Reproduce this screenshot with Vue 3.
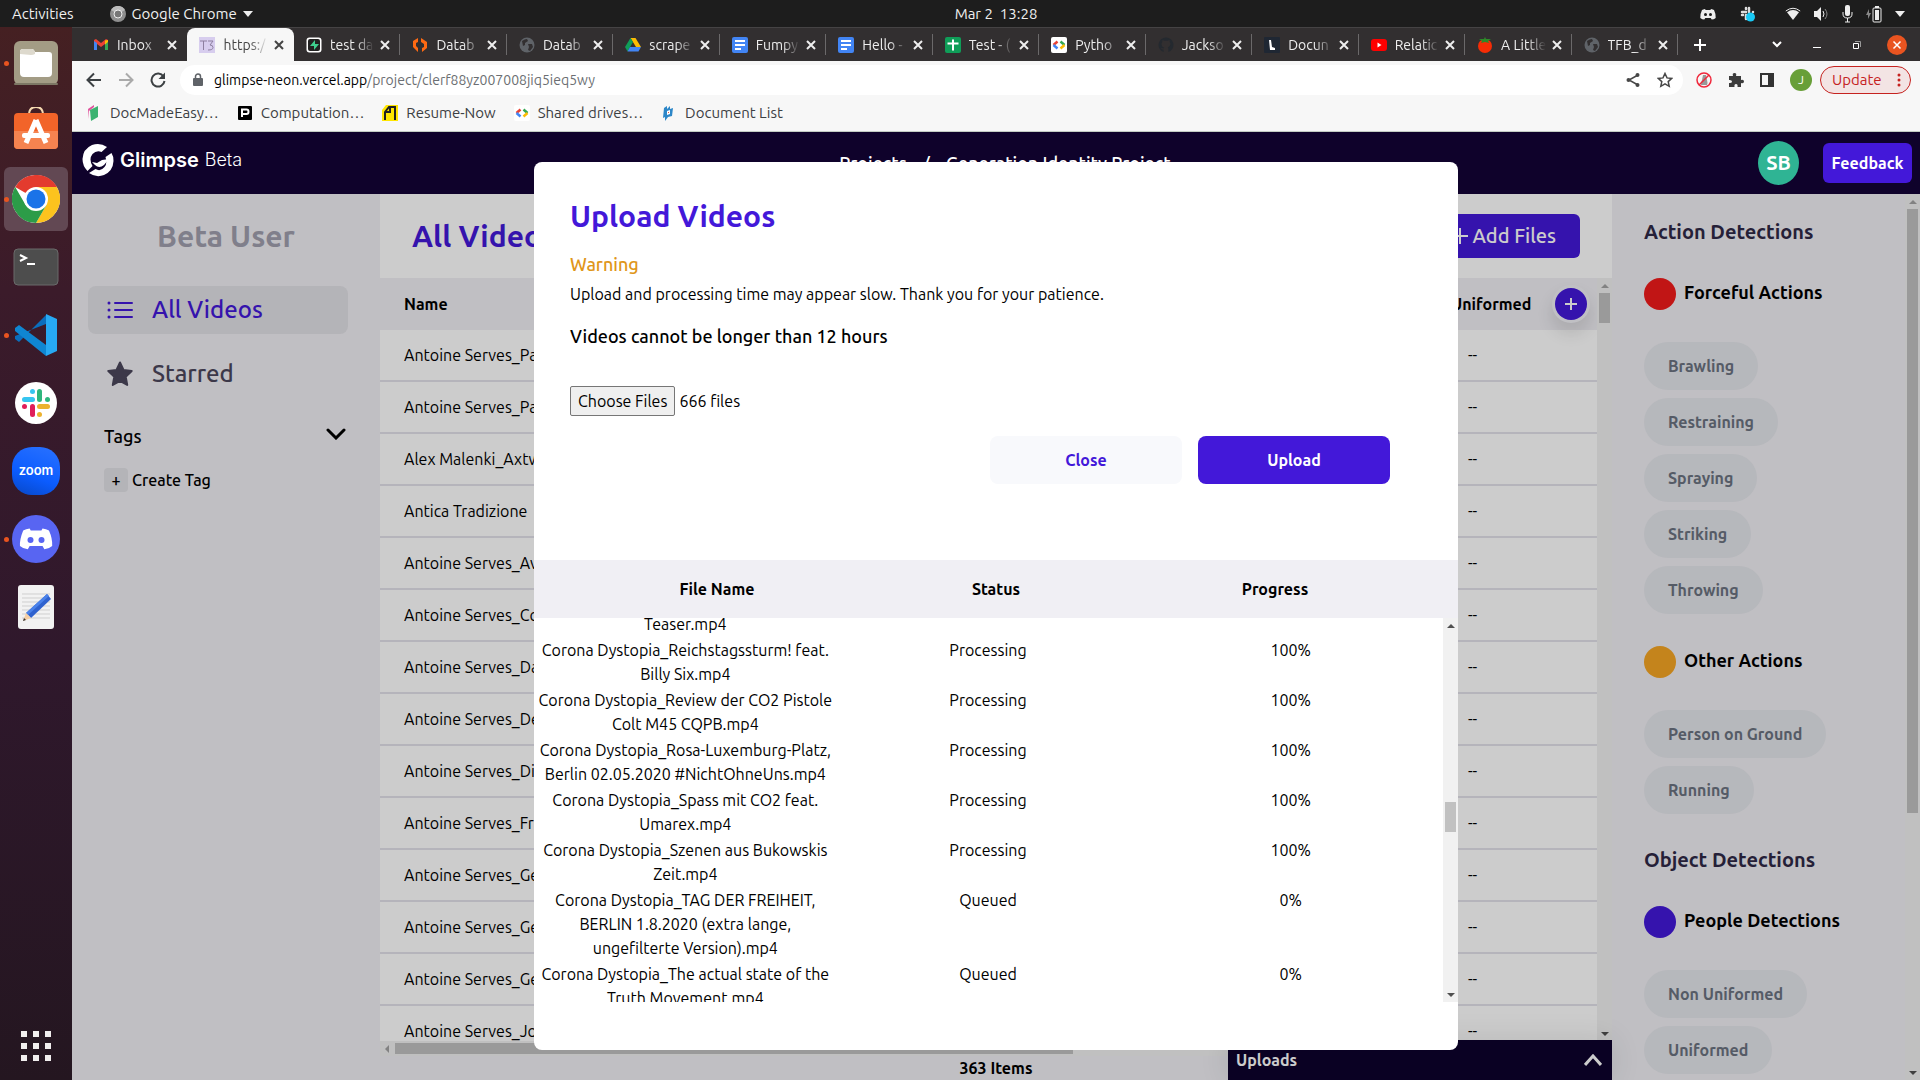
<script setup>
const art = {
  files: '<rect x="2" y="2" width="44" height="44" rx="6" fill="#a39c85"/><rect x="2" y="44" width="44" height="2" rx="1" fill="#7d7764"/><path d="M8 13q0-3 3-3h9q2 0 3 3h14q3 0 3 3v18q0 4-4 4H12q-4 0-4-4z" fill="#fff"/><path d="M8 15v-2q0-3 3-3h9q2 0 3 3v2q-2 1-4 1z" fill="#ddd9cd"/>',
  store: '<g transform="translate(0 -3)"><path d="M17 11q0-8 7-8t7 8" fill="none" stroke="#f5d9b0" stroke-width="2"/><rect x="2" y="9" width="44" height="36" rx="4" fill="#f26429"/><path d="M2 27h44v14q0 4-4 4H6q-4 0-4-4z" fill="#f58350"/><path d="M24 16 14 39M24 16l10 23" stroke="#fff" stroke-width="5"/><rect x="10" y="29" width="28" height="5" rx="2" fill="#fff"/></g>',
  chrome: '<circle cx="24" cy="24" r="24" fill="#fff"/><path d="M24 24 3.2 12A24 24 0 0 1 44.8 12z" fill="#e33b2e"/><path d="M24 0A24 24 0 0 1 44.8 12H24z" fill="#e33b2e"/><path d="M44.8 12A24 24 0 0 1 24 48L34.4 30 24 12z" fill="#fcc31e"/><path d="M3.2 12A24 24 0 0 0 24 48l10.4-18H13.6z" fill="#2c9c48"/><circle cx="24" cy="24" r="12" fill="#fff"/><circle cx="24" cy="24" r="9.500" fill="#1a73e8"/>',
  terminal: '<rect x="2" y="6" width="44" height="36" rx="4" fill="#4d4d4d" stroke="#6a6a6a"/><path d="m8 12 6 3-6 3" fill="none" stroke="#fff" stroke-width="2"/><path d="M15 21h8" stroke="#fff" stroke-width="2"/>',
  code: '<path d="M34 4 7 31l-4-3v-3L34 13z" fill="#0a6ebd"/><path d="M34 45 3 20v-3l4-3 27 20z" fill="#0f86d2"/><path d="m34 3 11 5v32l-11 5z" fill="#27a9f3"/>',
  slack: '<circle cx="24" cy="24" r="21" fill="#fff"/><g stroke-width="5" stroke-linecap="round"><path d="M20.500 20.500h-8" stroke="#36c5f0"/><path d="M20.500 12.500v0" stroke="#36c5f0"/><path d="M27.500 20.500v-8" stroke="#2eb67d"/><path d="M35.500 20.500h0" stroke="#2eb67d"/><path d="M27.500 27.500h8" stroke="#ecb22e"/><path d="M27.500 35.500h0" stroke="#ecb22e"/><path d="M20.500 27.500v8" stroke="#e01e5a"/><path d="M12.500 27.500h0" stroke="#e01e5a"/></g>',
  discord: '<circle cx="24" cy="24" r="24" fill="#5865f2"/><path d="M17 13q-4 .6-7 2.200Q6 25 6.500 32q4 3.500 8.500 3.500l2-3.500h14l2 3.500q4.500 0 8.500-3.500Q42 24 38 15.200 35 13.600 31 13l-1.200 2.300H18.200z" fill="#fff" transform="translate(2 1.500) scale(.92)"/><circle cx="18.500" cy="25" r="3" fill="#5865f2"/><circle cx="29.500" cy="25" r="3" fill="#5865f2"/>',
  editor: '<rect x="6" y="2" width="36" height="44" rx="3" fill="#f2f2f2"/><path d="M10 11h28M10 15h28M10 19h28M10 23h28M10 27h28M10 31h28M10 35h28" stroke="#cfcfcf"/><path d="m35 11 4 5-20 19-5-5z" fill="#2f62cf"/><path d="m35 11 2 2-21 19-2-2z" fill="#4a82ea"/><path d="m14 30 5 5-8 3z" fill="#f5cfa5"/><path d="m12 35 2 2-3 1z" fill="#333"/>',
  gmail: '<path d="M1 3v10h3V7l4 3 4-3v6h3V3l-2-1-5 4-5-4z" fill="#ea4335"/><path d="M1 4v9h3V6z" fill="#4285f4"/><path d="M15 4v9h-3V6z" fill="#34a853"/><path d="M12 3.500 15 3v2l-3 2.500z" fill="#fbbc04"/>',
  t3: '<rect width="16" height="16" fill="#d7cdee"/><path d="M1 4h7M4.500 4v9M9 4h5l-3 4q3 0 3 2.500T9 13" fill="none" stroke="#8d7f9f"/>',
  supa: '<rect x=".5" y=".5" width="15" height="15" rx="3" fill="#fff"/><rect x="2" y="2" width="12" height="12" rx="2" fill="#222"/><path d="m9 3-5 6h4v4l5-6H9z" fill="#3ecf8e"/>',
  orange: '<path d="M6 1 1 4v6l5 5v-4L4 9V6l2-1zM9 1l6 4v6l-5 4v-4l2-1V7L9 5z" fill="#ff6a13"/>',
  globe: '<circle cx="8" cy="8" r="7.500" fill="#5f6368"/><path d="M3 4q3-2 5-2l1 2-3 2v2l-2 1zM9 7l4 0 1 3-3 4-2-1 1-3z" fill="#322f30"/>',
  drive: '<path d="M5.500 1h5L16 10h-5z" fill="#fbbc04"/><path d="M5.500 1 0 10l2.500 4.500L8 5z" fill="#0f9d58"/><path d="M2.500 14.500h11L16 10H5z" fill="#4285f4"/>',
  doc: '<rect x="0" y="0" width="16" height="16" rx="2" fill="#4285f4"/><path d="M3 4h10M3 8h10M3 12h6" stroke="#fff" stroke-width="2"/>',
  sheet: '<rect width="16" height="16" rx="2" fill="#0f9d58"/><path d="M2.500 6.500h11M8 2.500v11" stroke="#fff" stroke-width="2"/>',
  brackets: '<rect width="16" height="16" rx="2" fill="#fff"/><path d="m6.500 4.500-4 3.500" stroke="#ea4335" stroke-width="2.500"/><path d="m2.500 8 4 3.500" stroke="#4285f4" stroke-width="2.500"/><path d="m9.500 4.500 4 3.500" stroke="#34a853" stroke-width="2.500"/><path d="m13.500 8-4 3.500" stroke="#fbbc04" stroke-width="2.500"/>',
  github: '<path d="M8 .5a7.500 7.500 0 0 0-2.400 14.600v-2.600q-2 .3-2.600-1.500 1.500.4 2.600.4l.5-1C4 10 3.500 8.500 3.500 7q0-1.300.8-2.100L4.400 3l2 .8h3.200l2-.8.100 1.900q.8.800.8 2.100 0 2-2.600 3.400.5.600.5 1.500v3.200A7.500 7.500 0 0 0 8 .5z" fill="#24292f"/>',
  lens: '<rect width="16" height="16" rx="1" fill="#1f2733"/><path d="M5 3h2l1 7 3 1v2H6z" fill="#fff"/>',
  youtube: '<rect y="2" width="16" height="12" rx="3" fill="#f00"/><path d="m6.500 5.500 4 2.500-4 2.500z" fill="#fff"/>',
  tomato: '<circle cx="8" cy="9" r="7" fill="#f72c05"/><path d="M2 2h5l1-2 1 2h5l-3 2 1 2-4-1-4 1 1-2z" fill="#2c8a28"/>',
  page: '<path d="m2 4 6-4v2L3 6v8z" fill="#e0529c"/><path d="m4 5 8-4v11l-7 4z" fill="#3cb371"/>',
  pbox: '<rect x="1" y="1" width="14" height="14" rx="1" fill="#000"/><path d="M5 12V4.500h4.500q2 0 2 2.200T9.500 9H5" fill="none" stroke="#fff" stroke-width="2"/>',
  resume: '<path d="M4 0h12v16H0V5z" fill="#ffe600"/><path d="M3 15V7l4-5h6v13M8 2v5H3" fill="none" stroke="#222" stroke-width="2"/>',
  list: '<path d="m3 3 3-2v3l3-3v3l3-1-1 8-4 1-3 4v-4L2 13z" fill="#2d87c8"/><path d="M6 6l3-1v4l-3 1z" fill="#fff"/><path d="M7 7h1v1H7z" fill="#e54"/>'
}
const dock = [
  { id: 'files', on: true }, { id: 'store' }, { id: 'chrome', on: true, active: true }, { id: 'terminal' },
  { id: 'code', on: true }, { id: 'slack' }, { id: 'zoom' }, { id: 'discord', on: true }, { id: 'editor' }
]
const tabs = [
  ['gmail', 'Inbox'], ['t3', 'https:/'], ['supa', 'test da'], ['orange', 'Datab'], ['globe', 'Datab'],
  ['drive', 'scrape'], ['doc', 'Fumpy'], ['doc', 'Hello -'], ['sheet', 'Test - ('], ['brackets', 'Pytho'],
  ['github', 'Jackso'], ['lens', 'Docun'], ['youtube', 'Relatic'], ['tomato', 'A Little'], ['globe', 'TFB_d']
]
const bookmarks = [
  ['page', 'DocMadeEasy…'], ['pbox', 'Computation…'], ['resume', 'Resume-Now'], ['brackets', 'Shared drives…'], ['list', 'Document List']
]
const videos = [
  'Antoine Serves_Pa', 'Antoine Serves_Pa', 'Alex Malenki_Axtw', 'Antica Tradizione', 'Antoine Serves_Av', 'Antoine Serves_Co',
  'Antoine Serves_Da', 'Antoine Serves_De', 'Antoine Serves_Di', 'Antoine Serves_Fr', 'Antoine Serves_Ge', 'Antoine Serves_Ge',
  'Antoine Serves_Ge', 'Antoine Serves_Jo'
]
const detections = [
  {
    title: 'Action Detections',
    groups: [
      { name: 'Forceful Actions', tone: 'red', chips: ['Brawling', 'Restraining', 'Spraying', 'Striking', 'Throwing'] },
      { name: 'Other Actions', tone: 'amber', chips: ['Person on Ground', 'Running'] }
    ]
  },
  { title: 'Object Detections', groups: [{ name: 'People Detections', tone: 'violet', chips: ['Non Uniformed', 'Uniformed'] }] }
]
const uploads = [
  ['Teaser.mp4', '', ''],
  ['Corona Dystopia_Reichstagssturm! feat.\nBilly Six.mp4', 'Processing', '100%'],
  ['Corona Dystopia_Review der CO2 Pistole\nColt M45 CQPB.mp4', 'Processing', '100%'],
  ['Corona Dystopia_Rosa-Luxemburg-Platz,\nBerlin 02.05.2020 #NichtOhneUns.mp4', 'Processing', '100%'],
  ['Corona Dystopia_Spass mit CO2 feat.\nUmarex.mp4', 'Processing', '100%'],
  ['Corona Dystopia_Szenen aus Bukowskis\nZeit.mp4', 'Processing', '100%'],
  ['Corona Dystopia_TAG DER FREIHEIT,\nBERLIN 1.8.2020 (extra lange,\nungefilterte Version).mp4', 'Queued', '0%'],
  ['Corona Dystopia_The actual state of the\nTruth Movement.mp4', 'Queued', '0%']
]
</script>

<template>
  <div class="desktop">
    <header class="topbar">
      <div class="top-left">
        <span>Activities</span>
        <span class="app-menu">
          <svg width="16" height="16" viewBox="0 0 16 16"><circle cx="8" cy="8" r="8" fill="#8f8f8f" /><path d="M8 8 1 4a8 8 0 0 1 14 0z" fill="#bbb" /><circle cx="8" cy="8" r="4" fill="#777" stroke="#eee" /></svg>
          Google Chrome
          <svg width="10" height="6" viewBox="0 0 10 6"><path d="M0 0h10L5 6z" fill="#eee" /></svg>
        </span>
      </div>
      <time class="clock">Mar 2&nbsp; 13:28</time>
      <div class="tray">
        <svg width="16" height="16" viewBox="0 0 16 16"><path d="M5 3Q3 3.300 2 4 0 8 .3 12q2 1.500 4 1.500l1-1.500h5.400l1 1.500q2 0 4-1.500Q16 8 14 4q-1-.7-3-1l-.6 1H5.600z" fill="#eee" /><circle cx="5.500" cy="8.500" r="1.500" fill="#1d1d1d" /><circle cx="10.500" cy="8.500" r="1.500" fill="#1d1d1d" /></svg>
        <svg class="tray-slack" width="16" height="16" viewBox="0 0 16 16"><path d="M6 6H2M6 2v1M9 6V2M13 6h0M6 9v4M2 9h1" stroke="#ddd" stroke-width="2.500" stroke-linecap="round" /><circle cx="10.500" cy="11" r="4.500" fill="#19c9f5" /></svg>
        <svg class="tray-wifi" width="16" height="14" viewBox="0 0 16 14"><path d="M.8 4Q8-1.500 15.200 4" fill="none" stroke="#eee" /><path d="M2 5.200Q8 1 14 5.200L8 13z" fill="#eee" /></svg>
        <svg width="16" height="16" viewBox="0 0 16 16"><path d="M1 5h3l4-4v14l-4-4H1z" fill="#eee" /><path d="M10 5q2 3 0 6" fill="none" stroke="#eee" /><path d="M12 3q4 5 0 10" fill="none" stroke="#888" /></svg>
        <svg width="12" height="18" viewBox="0 0 12 18"><rect x="4" y="0" width="5" height="11" rx="2" fill="#eee" /><path d="M2 7v2q0 4 4.500 4T11 9V7M6.500 13v4M4 17h5" fill="none" stroke="#eee" /></svg>
        <svg width="18" height="18" viewBox="0 0 18 18"><path d="M4 4 1 10h2v4l3-6H4z" fill="#888" /><path d="M10 1h4v2h-4z" fill="#eee" /><rect x="8" y="3" width="8" height="14" rx="1" fill="none" stroke="#eee" /><path d="M10 5h4v10h-4z" fill="#eee" /></svg>
        <svg width="10" height="6" viewBox="0 0 10 6"><path d="M0 0h10L5 6z" fill="#eee" /></svg>
      </div>
    </header>

    <div class="workspace">
      <nav class="dock" aria-label="Dock">
        <div v-for="d in dock" :key="d.id" class="dock-slot" :class="{ running: d.on, active: d.active }">
          <span v-if="d.id === 'zoom'" class="zoom-app">zoom</span>
          <svg v-else width="48" height="48" viewBox="0 0 48 48" v-html="art[d.id]"></svg>
        </div>
        <svg class="apps" width="30" height="30" viewBox="0 0 30 30"><path d="M3 0v30M15 0v30M27 0v30" stroke="#f1eeee" stroke-width="6" stroke-dasharray="6 6" /></svg>
      </nav>

      <div class="browser">
        <div class="tabstrip">
          <div class="tabs">
            <div v-for="(t, i) in tabs" :key="i" class="tab" :class="{ current: i === 1 }">
              <svg width="16" height="16" viewBox="0 0 16 16" v-html="art[t[0]]"></svg>
              <span class="tab-title">{{ t[1] }}</span>
              <svg class="tab-x" width="10" height="10" viewBox="0 0 10 10"><path d="m1 1 8 8M9 1 1 9" stroke="currentColor" stroke-width="2" /></svg>
            </div>
          </div>
          <div class="window-controls">
            <svg width="14" height="14" viewBox="0 0 14 14"><path d="M7 1v12M1 7h12" stroke="#fff" stroke-width="2" /></svg>
            <svg class="push" width="10" height="7" viewBox="0 0 10 7"><path d="m1 1 4 4 4-4" fill="none" stroke="#fff" stroke-width="2" /></svg>
            <svg width="8" height="8" viewBox="0 0 8 8"><path d="M0 6.500h8" stroke="#fff" /></svg>
            <svg width="8" height="8" viewBox="0 0 8 8"><path d="M.5 2.500h5v5h-5z" fill="none" stroke="#fff" /><path d="M2 .5h5.500V6" fill="none" stroke="#999" /></svg>
            <svg width="20" height="20" viewBox="0 0 20 20"><circle cx="10" cy="10" r="10" fill="#e95420" /><path d="m6.500 6.500 7 7M13.500 6.500l-7 7" stroke="#fff" stroke-width="1.500" /></svg>
          </div>
        </div>

        <div class="toolbar">
          <svg width="16" height="16" viewBox="0 0 16 16"><path d="M15 8H2M8 1.500 1.500 8 8 14.500" fill="none" stroke="#3c4043" stroke-width="2" /></svg>
          <svg width="16" height="16" viewBox="0 0 16 16"><path d="M1 8h13M8 1.500 14.500 8 8 14.500" fill="none" stroke="#aaa" stroke-width="2" /></svg>
          <svg width="16" height="16" viewBox="0 0 16 16"><path d="M13.500 4.500A6.500 6.500 0 1 0 14.500 9" fill="none" stroke="#3c4043" stroke-width="2" /><path d="M15 .5V7H8.500z" fill="#3c4043" /></svg>
          <div class="omnibox">
            <svg width="10" height="13" viewBox="0 0 10 13"><rect y="5" width="10" height="8" rx="1" fill="#5f6368" /><path d="M2.500 5V3.500a2.500 2.500 0 0 1 5 0V5" fill="none" stroke="#5f6368" stroke-width="1.500" /></svg>
            <span class="url">glimpse-neon.vercel.app<span>/project/clerf88yz007008jiq5ieq5wy</span></span>
            <svg width="14" height="14" viewBox="0 0 14 14"><path d="m12 2-9 5 9 5" fill="none" stroke="#474747" stroke-width="1.500" /><circle cx="11.500" cy="2" r="2" fill="#474747" /><circle cx="2.500" cy="7" r="2" fill="#474747" /><circle cx="11.500" cy="12" r="2" fill="#474747" /></svg>
            <svg class="bookmark-star" width="16" height="16" viewBox="0 0 16 16"><path d="m8 1.500 2 4.400 4.800.5-3.600 3.200 1 4.700L8 11.900l-4.200 2.400 1-4.700L1.200 6.400 6 5.900z" fill="none" stroke="#474747" stroke-width="1.500" /></svg>
          </div>
          <div class="extensions">
            <svg width="16" height="16" viewBox="0 0 16 16"><path d="M5 13q0-3 1-5l1-5h3l1 5q1 3 0 5z" fill="#999" /><circle cx="8" cy="8" r="7" fill="none" stroke="#f0283c" stroke-width="1.500" /><path d="M13 3 3 13" stroke="#f0283c" stroke-width="1.500" /></svg>
            <svg width="16" height="16" viewBox="0 0 16 16"><path d="M1 4h4q-1-3 1.500-3T8 4h5v4q3-.8 3 1.500T13 11v4H9.500q.5-3-1.500-3t-1.500 3H1v-4q3 .3 3-1.500T1 8z" fill="#3c3c3c" /></svg>
            <svg width="14" height="14" viewBox="0 0 14 14"><rect x="1" y="1" width="12" height="12" fill="none" stroke="#333" stroke-width="2" /><path d="M8 1h5v12H8z" fill="#333" /></svg>
            <span class="profile">J</span>
          </div>
          <button class="update">Update <svg width="4" height="14" viewBox="0 0 4 14"><circle cx="2" cy="2" r="1.500" fill="#c5221f" /><circle cx="2" cy="7" r="1.500" fill="#c5221f" /><circle cx="2" cy="12" r="1.500" fill="#c5221f" /></svg></button>
        </div>

        <div class="bookmarks">
          <a v-for="b in bookmarks" :key="b[1]" href="#"><svg width="16" height="16" viewBox="0 0 16 16" v-html="art[b[0]]"></svg>{{ b[1] }}</a>
        </div>

        <div class="page">
          <header class="app-header">
            <div class="brand">
              <svg width="32" height="34" viewBox="0 0 32 34"><path d="M25 4Q18-1 10 2 1 6 .5 16q0 7 5 12l5-5q-4-7 0-12 4-4 9-2z" fill="#fff" /><path d="M7 30q7 5 15 2 9-4 9.500-14 0-5-2-8l-6 4q2 7-1 10-4 5-9 2z" fill="#fff" /><path d="m10 19 5 1 5-3 7-1-5 6q-5 4-9 0z" fill="#fff" /></svg>
              <strong>Glimpse</strong><span>Beta</span>
            </div>
            <div class="crumbs"><a href="#">Projects</a><span>/</span><a href="#">Generation Identity Project</a></div>
            <div class="account"><span class="avatar">SB</span><button class="feedback">Feedback</button></div>
          </header>

          <div class="columns">
            <aside class="sidebar">
              <h2>Beta User</h2>
              <a class="nav-item selected" href="#">
                <svg width="26" height="18" viewBox="0 0 26 18"><path d="M8 2h17M8 9h17M8 16h17" stroke="currentColor" stroke-width="2" stroke-linecap="round" /><path d="M2 2h0M2 9h0M2 16h0" stroke="currentColor" stroke-width="3" stroke-linecap="round" /></svg>
                All Videos
              </a>
              <a class="nav-item" href="#">
                <svg width="26" height="26" viewBox="0 0 26 26"><path d="m13 1.500 3.500 7.500 8.200 1-6 5.700 1.500 8.300-7.200-4-7.200 4 1.500-8.300-6-5.700 8.200-1z" fill="currentColor" stroke="currentColor" stroke-width="2" stroke-linejoin="round" /></svg>
                Starred
              </a>
              <div class="tags">
                <span>Tags</span>
                <svg width="20" height="12" viewBox="0 0 20 12"><path d="m2 2 8 8 8-8" fill="none" stroke="#000" stroke-width="3" stroke-linecap="round" /></svg>
              </div>
              <div class="create-tag"><button aria-label="Add tag">+</button><span>Create Tag</span></div>
            </aside>

            <main class="library">
              <div class="library-head">
                <h1>All Videos</h1>
                <button><svg width="16" height="16" viewBox="0 0 16 16"><path d="M8 0v16M0 8h16" stroke="#fff" stroke-width="2" /></svg>Add Files</button>
              </div>
              <div class="library-body">
                <div class="grid-wrap">
                  <table class="video-table">
                    <thead><tr><th>Name</th><th class="last">Uniformed<button aria-label="Add column"><svg width="12" height="12" viewBox="0 0 12 12"><path d="M6 0v12M0 6h12" stroke="#fff" stroke-width="2" /></svg></button></th></tr></thead>
                    <tbody><tr v-for="(v, i) in videos" :key="i"><td>{{ v }}</td><td class="last">--</td></tr></tbody>
                  </table>
                </div>
                <div class="vbar"><i class="up"></i><b class="thumb-small"></b><i class="down"></i></div>
              </div>
              <div class="hbar"><i></i><b></b></div>
              <footer>363 Items</footer>
              <button class="uploads-panel">Uploads <svg width="18" height="12" viewBox="0 0 18 12"><path d="m1 11 8-9 8 9" fill="none" stroke="#fff" stroke-width="3" /></svg></button>
            </main>

            <aside class="detections">
              <div class="detections-scroll">
                <section v-for="s in detections" :key="s.title">
                  <h3>{{ s.title }}</h3>
                  <div v-for="g in s.groups" :key="g.name" class="group">
                    <h4><i :class="g.tone"></i>{{ g.name }}</h4>
                    <div class="chips"><button v-for="c in g.chips" :key="c">{{ c }}</button></div>
                  </div>
                </section>
              </div>
              <div class="vbar"><i class="up"></i><b class="thumb-tall"></b><i class="down"></i></div>
            </aside>
            <div class="backdrop"></div>
          </div>

          <div class="modal" role="dialog" aria-labelledby="upload-title">
            <div class="modal-top">
              <h2 id="upload-title">Upload Videos</h2>
              <h3>Warning</h3>
              <p>Upload and processing time may appear slow. Thank you for your patience.</p>
              <h4>Videos cannot be longer than 12 hours</h4>
              <div class="file-field">
                <label for="video-files">Choose Files</label>
                <input id="video-files" type="file" multiple />
                <span>666 files</span>
              </div>
              <div class="actions"><button class="close">Close</button><button class="submit">Upload</button></div>
            </div>
            <table class="upload-table">
              <thead><tr><th>File Name</th><th>Status</th><th>Progress</th></tr></thead>
              <tbody>
                <tr v-for="(u, i) in uploads" :key="i"><td>{{ u[0] }}</td><td>{{ u[1] }}</td><td>{{ u[2] }}</td></tr>
              </tbody>
            </table>
            <div class="vbar modal-bar"><i class="up"></i><b></b><i class="down"></i></div>
          </div>
        </div>
      </div>
    </div>
  </div>
</template>

<style>
body { margin: 0; overflow: hidden; }
</style>

<style scoped>
* { box-sizing: border-box; }
h1, h2, h3, h4, p { margin: 0; }
button { border: 0; padding: 0; font: inherit; color: inherit; cursor: pointer; }
a { color: inherit; text-decoration: none; }
svg { flex: none; display: block; }

.desktop { height: 100vh; display: flex; flex-direction: column; font-family: Ubuntu, "Noto Sans", sans-serif; font-size: 16px; line-height: 24px; color: #000; }

.topbar { height: 27px; flex: none; display: grid; grid-template-columns: 1fr auto 1fr; align-items: center; padding-left: 72px; background: #1d1d1d; color: #f0f0f0; font-size: 15px; }
.top-left { display: flex; gap: 36px; margin-left: -60px; }
.app-menu { display: flex; align-items: center; gap: 6px; }
.tray { display: flex; justify-content: flex-end; align-items: center; gap: 12px; padding-right: 15px; }
.tray-slack { margin-left: 12px; }
.tray-wifi { margin-left: 17px; }

.workspace { flex: 1; min-height: 0; display: flex; }
.dock { width: 72px; flex: none; display: flex; flex-direction: column; align-items: center; gap: 4px; padding: 4px 4px 19px; background: linear-gradient(#452022, #3b1b2a 25%, #2f182c 60%, #241620); }
.dock-slot { position: relative; width: 64px; height: 64px; flex: none; display: grid; place-items: center; border-radius: 6px; }
.dock-slot.active { background: #624853; }
.dock-slot.running::before { content: ""; position: absolute; left: 0; top: 30px; width: 5px; height: 5px; border-radius: 50%; background: #e95420; }
.zoom-app { width: 48px; height: 48px; border-radius: 20px; background: linear-gradient(20deg, #0847c4, #0b5cff 40%, #2a72ff); color: #fff; font: 600 13px/46px Inter, sans-serif; text-align: center; }
.apps { margin-top: auto; }

.browser { flex: 1; min-width: 0; display: flex; flex-direction: column; }
.tabstrip { height: 34px; flex: none; display: flex; background: #322f30; border-top: 1px solid #454344; color: #eee; }
.tabs { flex: 1; min-width: 0; display: flex; padding-left: 9px; }
.tab { position: relative; flex: 1 1 0; min-width: 0; display: flex; align-items: center; padding: 0 10px 0 12px; font-size: 14px; }
.tab::after { content: ""; position: absolute; right: 0; top: 6px; height: 21px; width: 1px; background: #6b696a; }
.tab:first-child::after, .tab.current::after { display: none; }
.tab.current { background: #f7f7f7; border-radius: 8px 8px 0 0; color: #444; }
.tab-title { flex: 1; min-width: 0; margin: 0 6px 0 8px; overflow: hidden; white-space: nowrap; mask-image: linear-gradient(90deg, #000 60%, transparent); }
.window-controls { width: 242px; flex: none; display: flex; align-items: center; padding: 0 3px 0 2px; }
.window-controls svg { width: 40px; }
.push { margin-left: auto; }

.toolbar { height: 37px; flex: none; display: flex; align-items: center; gap: 16px; padding: 0 9px 0 14px; background: #f7f7f7; }
.omnibox { flex: 1; min-width: 0; height: 30px; display: flex; align-items: center; gap: 11px; margin: 0 -3px 0 -2px; padding: 0 10px 0 13px; border-radius: 15px; background: #fff; font-size: 14px; }
.url { flex: 1; }
.url span { color: #6c6f73; }
.bookmark-star { margin-left: 6px; }
.extensions { display: flex; align-items: center; gap: 16px; }
.profile { width: 22px; height: 22px; border-radius: 50%; background: #689f38; color: #fff; text-align: center; font-size: 12px; line-height: 22px; }
.update { display: flex; align-items: center; justify-content: space-between; width: 91px; height: 28px; margin-left: -8px; padding: 0 9px 0 11px; border: 1px solid #c5221f; border-radius: 14px; background: #f3e4e4; color: #c5221f; font-size: 15px; }
.bookmarks { height: 34px; flex: none; display: flex; align-items: center; gap: 18px; padding: 0 0 4px 14px; background: #f7f7f7; border-bottom: 1px solid #c3ccc3; color: #3c4043; font-size: 15px; }
.bookmarks a { display: flex; align-items: center; gap: 8px; }

.page { position: relative; flex: 1; min-height: 0; display: flex; flex-direction: column; overflow: hidden; }
.app-header { height: 62px; flex: none; display: grid; grid-template-columns: 1fr auto 1fr; align-items: center; padding: 0 8px 0 10px; background: #0f022b; color: #fff; }
.brand { display: flex; align-items: center; gap: 6px; padding-bottom: 6px; font-family: Inter, sans-serif; font-size: 18px; }
.brand strong { font-size: 20px; font-weight: 600; }
.brand span { font-weight: 300; }
.crumbs { display: flex; gap: 16px; padding-left: 16px; font-size: 18px; font-weight: 500; }
.account { display: flex; justify-content: flex-end; align-items: center; gap: 24px; font-weight: 700; }
.avatar { width: 41px; height: 44px; border-radius: 50%; background: #2fb494; text-align: center; font-size: 20px; line-height: 44px; }
.feedback { width: 89px; height: 40px; border-radius: 6px; background: #4318d9; }

.columns { position: relative; flex: 1; min-height: 0; display: flex; }
.backdrop { position: absolute; inset: 0; background: rgba(0, 0, 0, .2); }
.sidebar { width: 308px; flex: none; padding: 24px 32px 0 16px; background: #f0eff4; }
.sidebar h2 { margin-bottom: 32px; padding-left: 16px; color: #a09fae; font-size: 30px; line-height: 36px; font-weight: 700; text-align: center; }
.nav-item { display: flex; align-items: center; gap: 19px; height: 48px; margin-bottom: 16px; padding-left: 19px; border-radius: 8px; color: #4b475c; font-size: 24px; font-weight: 500; }
.nav-item.selected { background: #e2e1e6; color: #4318d9; }
.tags { display: flex; justify-content: space-between; align-items: flex-start; padding: 10px 2px 0 16px; font-size: 18px; font-weight: 500; }
.tags svg { margin-top: 4px; }
.create-tag { display: flex; align-items: center; gap: 4px; margin-top: 20px; padding-left: 16px; font-weight: 500; }
.create-tag button { width: 24px; height: 24px; border-radius: 4px; background: #e2e1e6; }

.library { position: relative; flex: 1; min-width: 0; display: flex; flex-direction: column; background: #f0eff4; }
.library-head { height: 84px; flex: none; display: flex; justify-content: space-between; align-items: center; padding: 0 32px; background: #fff; }
.library-head h1 { color: #4318d9; font-size: 30px; font-weight: 700; }
.library-head button { height: 44px; display: flex; align-items: center; gap: 4px; padding: 0 24px; border-radius: 6px; background: #4318d9; color: #fff; font-size: 20px; font-weight: 500; }
.library-body { flex: 1; min-height: 0; display: flex; }
.grid-wrap { flex: 1; min-width: 0; overflow: hidden; background: #fff; }
.video-table { width: 100%; border-collapse: separate; border-spacing: 0; table-layout: fixed; }
.video-table th { height: 52px; padding: 0 0 0 24px; background: #f0eff4; text-align: left; font-weight: 700; }
.video-table td { height: 52px; padding: 0 0 0 24px; border-bottom: 2px solid #e3e2ea; }
.video-table .last { position: relative; width: 153px; }
.video-table th.last { padding-left: 7px; }
.video-table th button { position: absolute; right: 10px; top: 10px; width: 32px; height: 32px; display: grid; place-items: center; border-radius: 50%; background: #4318d9; box-shadow: 0 0 0 3px #f1f1f5, 0 10px 16px 4px rgba(0, 0, 0, .1); }
.library footer { height: 24px; flex: none; text-align: center; font-weight: 700; }
.uploads-panel { position: absolute; right: 0; bottom: 0; width: 384px; height: 40px; display: flex; align-items: center; justify-content: space-between; padding: 0 10px 0 8px; background: #0d022c; color: #fff; font-weight: 700; box-shadow: 0 0 30px rgba(0, 0, 0, .1); }

.vbar { width: 15px; flex: none; display: flex; flex-direction: column; align-items: center; background: #f1f1f1; }
.vbar i { width: 0; height: 15px; flex: none; position: relative; }
.vbar i::before { content: ""; position: absolute; left: -4px; top: 6px; border: 4px solid transparent; border-top: 0; border-bottom-color: #a3a3a3; }
.vbar .down { margin-top: auto; }
.vbar .down::before { border: 4px solid transparent; border-bottom: 0; border-top-color: #505050; }
.vbar b { width: 11px; background: #c1c1c1; }
.thumb-small { height: 30px; }
.thumb-tall { height: 604px; }
.hbar { height: 15px; flex: none; display: flex; align-items: center; background: #f1f1f1; }
.hbar i { margin: 0 6px 0 5px; border: 4px solid transparent; border-left: 0; border-right-color: #a3a3a3; }
.hbar b { width: 55%; height: 11px; background: #c1c1c1; }

.detections { width: 308px; flex: none; display: flex; background: #f0eff4; }
.detections-scroll { flex: 1; min-width: 0; overflow: hidden; padding: 24px 0 0 32px; }
.detections h3 { color: #2f2946; font-size: 20px; line-height: 28px; font-weight: 700; }
.group { padding: 32px 0; }
.group + .group { padding-top: 0; }
.detections h4 { height: 32px; display: flex; gap: 8px; font-size: 18px; line-height: 28px; font-weight: 700; }
.detections h4 i { width: 32px; height: 32px; border-radius: 50%; }
.red { background: #f21b1b; }
.amber { background: #f5a524; }
.violet { background: #4318d9; }
.chips { display: flex; flex-direction: column; align-items: flex-start; gap: 8px; margin-top: 32px; }
.chips button { height: 48px; padding: 0 24px; border-radius: 24px; background: #e4e6eb; color: #6b7280; font-weight: 700; }

.modal { position: absolute; top: 30px; bottom: 30px; left: 50%; width: 50%; transform: translateX(-50%); background: #fff; border-radius: 8px; overflow: hidden; }
.modal-top { height: 398px; padding: 36px 68px 0 36px; }
.modal h2 { color: #4318d9; font-size: 30px; line-height: 36px; font-weight: 700; }
.modal h3 { margin-top: 16px; color: #e0961a; font-size: 18px; line-height: 28px; font-weight: 500; }
.modal p { margin-top: 4px; }
.modal h4 { margin-top: 16px; font-size: 18px; line-height: 28px; font-weight: 500; }
.file-field { position: relative; display: flex; align-items: center; gap: 4px; margin-top: 36px; height: 30px; }
.file-field label { height: 30px; padding: 0 7px; border: 1px solid #767676; border-radius: 2px; background: #efefef; line-height: 28px; }
.file-field input { position: absolute; left: 0; top: 0; width: 107px; height: 30px; opacity: 0; }
.actions { display: flex; justify-content: flex-end; gap: 16px; margin-top: 20px; font-weight: 700; }
.actions button { width: 192px; height: 48px; border-radius: 8px; }
.close { background: #f8f9fc; color: #4318d9; }
.submit { background: #4318d9; color: #fff; }
.upload-table { display: block; }
.upload-table thead { display: block; background: #f0eff4; }
.upload-table thead tr { display: grid; grid-template-columns: 366fr 192fr 366fr; height: 58px; align-items: center; }
.upload-table th { padding: 0; font-weight: 700; }
.upload-table tbody { display: flex; flex-direction: column; justify-content: flex-start; height: 384px; margin-right: 16px; overflow: hidden; }
.upload-table tbody tr { flex: none; display: grid; grid-template-columns: repeat(3, 1fr); padding: 1px 0; }
.upload-table tbody tr:first-child { margin-top: -7px; }
.upload-table td { padding: 0; text-align: center; white-space: pre; }
.modal-bar { position: absolute; right: 0; top: 456px; height: 384px; }
.modal-bar .up::before { border-bottom-color: #505050; }
.modal-bar b { height: 30px; margin-top: 169px; }
</style>
